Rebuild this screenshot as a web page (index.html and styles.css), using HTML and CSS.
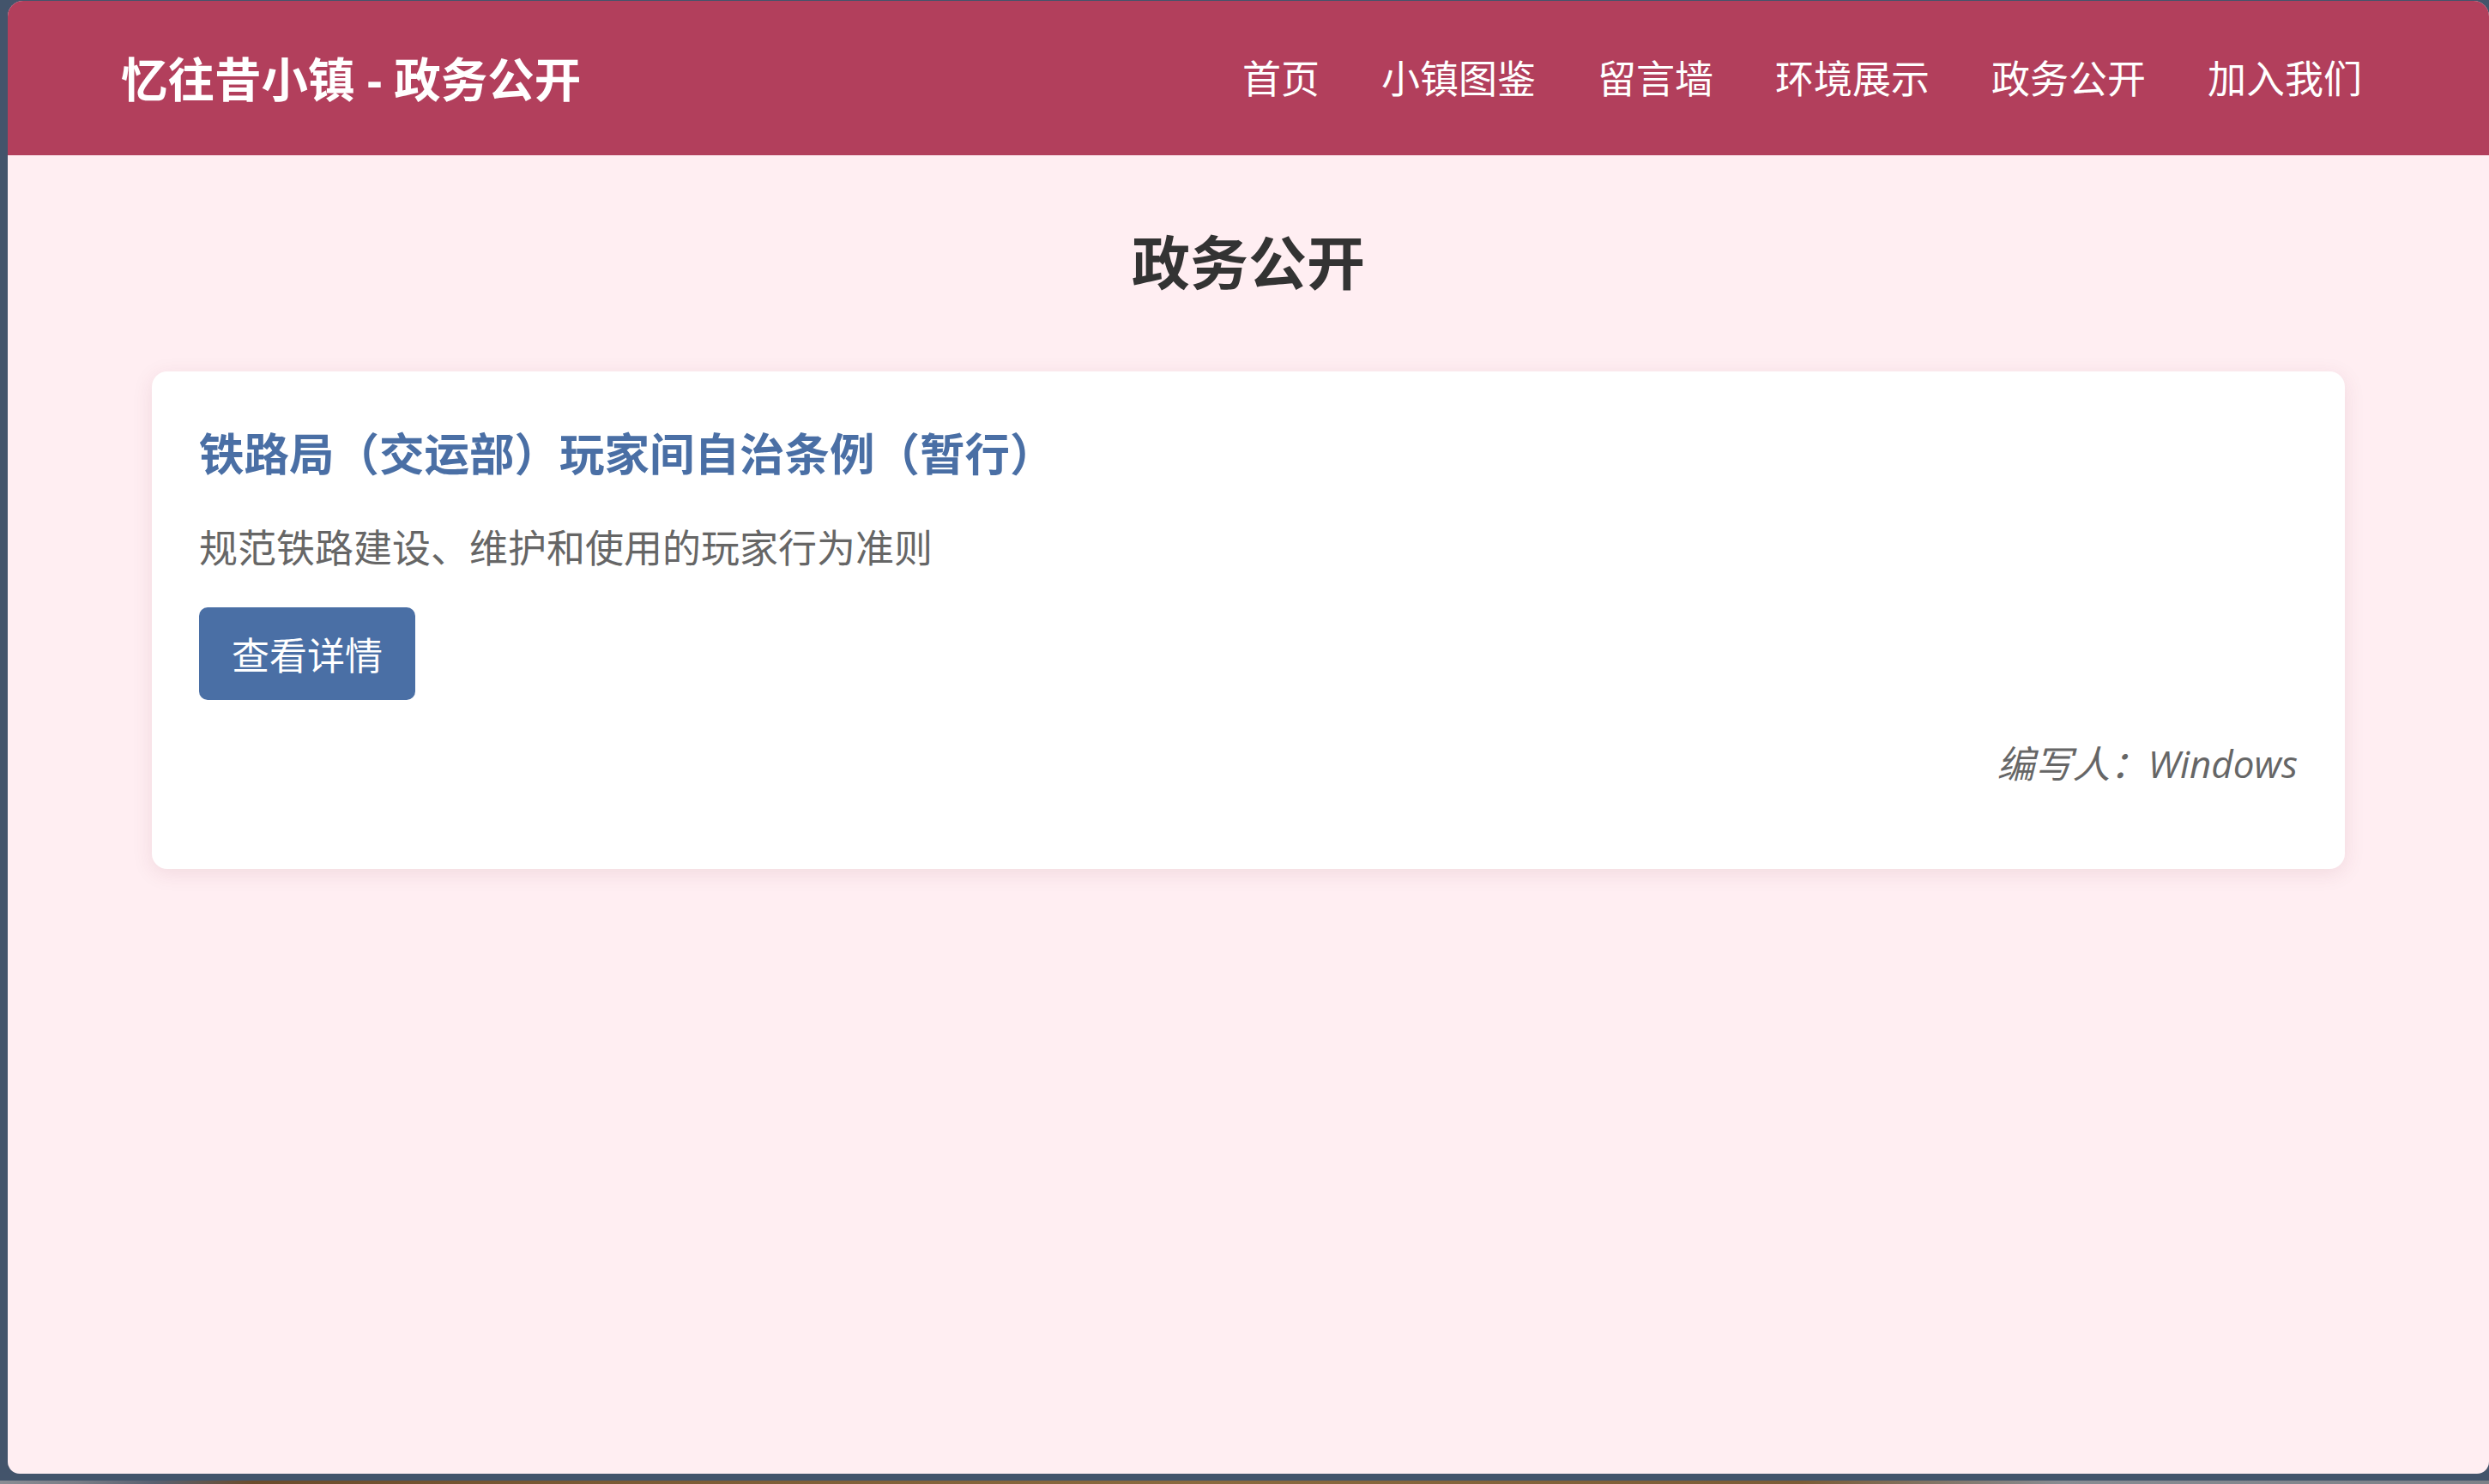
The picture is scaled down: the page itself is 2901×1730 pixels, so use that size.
FILE: index.html
```html
<!DOCTYPE html>
<html lang="zh-CN">
  <head>
    <meta charset="UTF-8" />
    <title>忆往昔小镇 - 政务公开</title>
    <link rel="stylesheet" href="styles.css">
  </head>
  <body>
    <div class="window">
      <!-- Top bar -->
      <header class="topbar">
        <div class="logo">忆往昔小镇 - 政务公开</div>
        <nav class="nav">
          <a href="#">首页</a>
          <a href="#">小镇图鉴</a>
          <a href="#">留言墙</a>
          <a href="#">环境展示</a>
          <a href="#">政务公开</a>
          <a href="#">加入我们</a>
        </nav>
      </header>

      <!-- Documents -->
      <main class="content">
        <h2 class="page-title">政务公开</h2>

        <div class="doc-card">
          <h3 class="doc-title">铁路局（交运部）玩家间自治条例（暂行）</h3>
          <p class="doc-desc">规范铁路建设、维护和使用的玩家行为准则</p>
          <button class="doc-btn">查看详情</button>
          <p class="doc-author">编写人：Windows</p>
        </div>
      </main>
    </div>
    <div class="desk-strip"></div>
  </body>
</html>
```

FILE: styles.css
```css
html,
body {
  margin: 0;
  height: 1730px;
  overflow: hidden;
}
body {
  background-color: #43546b;
  font-family: "Open Sans", "Noto Sans CJK SC", sans-serif;
}
.window {
  margin: 1px 0 0 9px;
  height: 1717px;
  background-color: #ffeef2;
  border-radius: 18px 18px 14px 14px;
  overflow: hidden;
}
.desk-strip {
  margin-top: 8px;
  height: 4px;
  background: linear-gradient(
    to right,
    #8a8d94 0,
    #7a7d86 90px,
    #5a6070 180px,
    #6b4c2c 295px,
    #7a5a34 700px,
    #8a6a3e 1400px,
    #7b5c36 2100px,
    #888c92 2405px,
    #7d8188 2901px
  );
}

/* Top bar */
.topbar {
  height: 180px;
  padding: 2px 148px 0 132px;
  box-sizing: border-box;
  background-color: #b23f5c;
  display: flex;
  align-items: center;
  justify-content: space-between;
}
.logo {
  color: white;
  font-size: 54.5px;
  font-weight: bold;
  line-height: 70px;
}
.nav {
  display: flex;
  gap: 72px;
}
.nav a {
  color: white;
  font-size: 45px;
  line-height: 60px;
  text-decoration: none;
}

/* Content */
.content {
  padding: 0 168px;
}
.page-title {
  margin: 75px 0 77px;
  font-size: 68px;
  line-height: 100px;
  text-align: center;
  color: #333;
}
.doc-card {
  background-color: white;
  border-radius: 18px;
  padding: 55px;
  box-shadow: 0 5px 24px rgba(120, 40, 60, 0.1);
}
.doc-title {
  margin: 0 0 36px;
  font-size: 52.5px;
  line-height: 82px;
  color: #4a6fa5;
}
.doc-desc {
  margin: 0 0 36px;
  font-size: 45px;
  line-height: 66px;
  color: #666;
}
.doc-btn {
  display: block;
  height: 108px;
  padding: 0 38px;
  border: none;
  border-radius: 10px;
  background-color: #4a6fa5;
  color: white;
  font-family: "Open Sans", "Noto Sans CJK SC", sans-serif;
  font-size: 44px;
  cursor: pointer;
}
.doc-author {
  margin: 41px 0 35px;
  font-size: 44px;
  line-height: 66px;
  font-style: italic;
  text-align: right;
  color: #666;
}
```
